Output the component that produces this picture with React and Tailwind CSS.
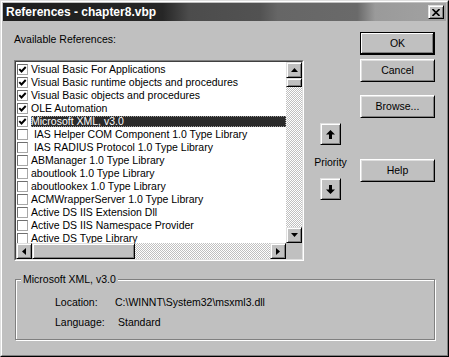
const raised =
  "border border-t-[#dfdfdf] border-l-[#dfdfdf] border-r-black border-b-black shadow-[inset_1px_1px_#fff,inset_-1px_-1px_#808080]";

const track =
  "bg-[repeating-conic-gradient(#fff_0_25%,#c0c0c0_0_50%)] bg-[length:2px_2px]";

const references = [
  { label: "Visual Basic For Applications", checked: true },
  { label: "Visual Basic runtime objects and procedures", checked: true },
  { label: "Visual Basic objects and procedures", checked: true },
  { label: "OLE Automation", checked: true },
  { label: "Microsoft XML, v3.0", checked: true, selected: true },
  { label: " IAS Helper COM Component 1.0 Type Library" },
  { label: " IAS RADIUS Protocol 1.0 Type Library" },
  { label: "ABManager 1.0 Type Library" },
  { label: "aboutlook 1.0 Type Library" },
  { label: "aboutlookex 1.0 Type Library" },
  { label: "ACMWrapperServer 1.0 Type Library" },
  { label: "Active DS IIS Extension Dll" },
  { label: "Active DS IIS Namespace Provider" },
  { label: "Active DS Type Library" },
];

const Arrow = ({ dir }) => {
  const points = {
    up: "3.5,0 7,4 0,4",
    down: "0,0 7,0 3.5,4",
    left: "4,0 4,7 0,3.5",
    right: "0,0 4,3.5 0,7",
  }[dir];
  const vertical = dir === "up" || dir === "down";
  return (
    <svg width={vertical ? 7 : 4} height={vertical ? 4 : 7} viewBox={vertical ? "0 0 7 4" : "0 0 4 7"}>
      <polygon points={points} fill="#000" />
    </svg>
  );
};

const ScrollButton = ({ dir }) => (
  <div className={`flex h-[16px] w-[16px] shrink-0 items-center justify-center bg-[#c0c0c0] ${raised}`}>
    <Arrow dir={dir} />
  </div>
);

const CheckBox = ({ checked }) => (
  <div className="ml-[1px] flex h-[11px] w-[11px] shrink-0 items-center justify-center border border-t-[#6f6f6f] border-l-[#6f6f6f] border-r-[#a8a8a8] border-b-[#a8a8a8] bg-white">
    {checked && (
      <svg width="9" height="9" viewBox="0 0 9 9">
        <path d="M1.3 4.2 L3.5 6.5 L7.7 2" fill="none" stroke="#000" strokeWidth="1.9" />
      </svg>
    )}
  </div>
);

const ReferenceList = () => (
  <div className="mt-[14px] h-[201px] w-[290px] border border-t-[#808080] border-l-[#808080] border-r-white border-b-white">
    <div className="flex h-full w-full flex-col border border-t-[#404040] border-l-[#404040] border-r-[#dfdfdf] border-b-[#dfdfdf] bg-white">
      <div className="flex h-[181px]">
        <div className="flex-1 overflow-hidden pt-[1px]">
          {references.map((ref) => (
            <div key={ref.label} className="flex h-[13px] items-center">
              <CheckBox checked={ref.checked} />
              {ref.selected ? (
                <div className="ml-[3px] flex h-[11px] flex-1 items-center border border-dotted border-[#9a9a9a] bg-[#2a2a2a] text-white">
                  <span className="-ml-[1px] whitespace-pre">{ref.label}</span>
                </div>
              ) : (
                <span className="ml-[3px] whitespace-pre">{ref.label}</span>
              )}
            </div>
          ))}
        </div>
        <div className="flex w-[16px] flex-col">
          <ScrollButton dir="up" />
          <div className={`h-[9px] bg-[#c0c0c0] ${raised}`} />
          <div className={`flex-1 ${track}`} />
          <ScrollButton dir="down" />
        </div>
      </div>
      <div className="flex h-[16px]">
        <ScrollButton dir="left" />
        <div className={`w-[103px] bg-[#c0c0c0] ${raised}`} />
        <div className={`flex-1 ${track}`} />
        <ScrollButton dir="right" />
        <div className="w-[16px] bg-[#c0c0c0]" />
      </div>
    </div>
  </div>
);

const PriorityButton = ({ down }) => (
  <div className={`flex h-[22px] w-[21px] items-center justify-center bg-[#c0c0c0] ${raised}`}>
    <svg width="9" height="9" viewBox="0 0 9 9" className={down ? "rotate-180" : ""}>
      <polygon points="4.5,0 9,4.5 6,4.5 6,9 3,9 3,4.5 0,4.5" fill="#000" />
    </svg>
  </div>
);

const DialogButton = ({ label, isDefault, className = "" }) => (
  <div
    className={`flex h-[23px] w-[75px] items-center justify-center bg-[#c0c0c0] ${
      isDefault
        ? "border border-black shadow-[inset_-1px_-1px_#000,inset_1px_1px_#fff,inset_-2px_-2px_#808080]"
        : "border border-t-white border-l-white border-r-black border-b-black shadow-[inset_1px_1px_#dfdfdf,inset_-1px_-1px_#808080]"
    } ${className}`}
  >
    {label}
  </div>
);

export default function App() {
  return (
    <div className="h-[357px] w-[449px] bg-[#c0c0c0] text-[10.5px] leading-[13px] text-black [font-family:'Liberation_Sans',Arial,sans-serif]">
      <div className="h-full border border-t-[#dfdfdf] border-l-[#dfdfdf] border-r-black border-b-black">
        <div className="h-full border border-t-white border-l-white border-r-[#808080] border-b-[#808080] p-[1px]">
          <div className="flex h-[18px] items-center justify-between bg-[linear-gradient(to_right,#1e1e1e_0%,#262626_36%,#4c4c4c_42%,#525252_58%,#666666_62%,#6a6a6a_80%,#9a9a9a_84%,#a2a2a2_100%)] pl-[3px] pr-[2px]">
            <span className="text-[12px] font-bold leading-none text-white">References - chapter8.vbp</span>
            <div className={`flex h-[14px] w-[16px] items-center justify-center bg-[#c0c0c0] ${raised}`}>
              <svg width="8" height="7" viewBox="0 0 8 7">
                <path d="M0.5 0 L7.5 7 M7.5 0 L0.5 7" stroke="#000" strokeWidth="1.6" />
              </svg>
            </div>
          </div>

          <div className="flex flex-col pl-[11px]">
            <div className="flex items-start">
              <div className="flex w-[290px] flex-col">
                <div className="mt-[12px]">Available References:</div>
                <ReferenceList />
              </div>

              <div className="flex w-[53px] flex-col items-center pt-[102px]">
                <PriorityButton />
                <div className="mt-[11px]">Priority</div>
                <div className="mt-[9px]">
                  <PriorityButton down />
                </div>
              </div>

              <div className="ml-[3px] flex w-[75px] flex-col pt-[11px]">
                <DialogButton label="OK" isDefault />
                <DialogButton label="Cancel" className="mt-[4px]" />
                <DialogButton label="Browse..." className="mt-[13px]" />
                <DialogButton label="Help" className="mt-[41px]" />
              </div>
            </div>

            <fieldset className="m-0 mt-[12px] ml-[1px] h-[67px] w-[420px] border border-[#808080] px-[5px] shadow-[inset_1px_1px_#fff,1px_1px_#fff]">
              <legend className="bg-[#c0c0c0] px-[2px] leading-[13px]">Microsoft XML, v3.0</legend>
              <div className="grid grid-cols-[60px_auto] gap-y-[7px] pl-[34px] pt-[10px]">
                <span>Location:</span>
                <span>C:\WINNT\System32\msxml3.dll</span>
                <span>Language:</span>
                <span className="ml-[3px]">Standard</span>
              </div>
            </fieldset>
          </div>
        </div>
      </div>
    </div>
  );
}
